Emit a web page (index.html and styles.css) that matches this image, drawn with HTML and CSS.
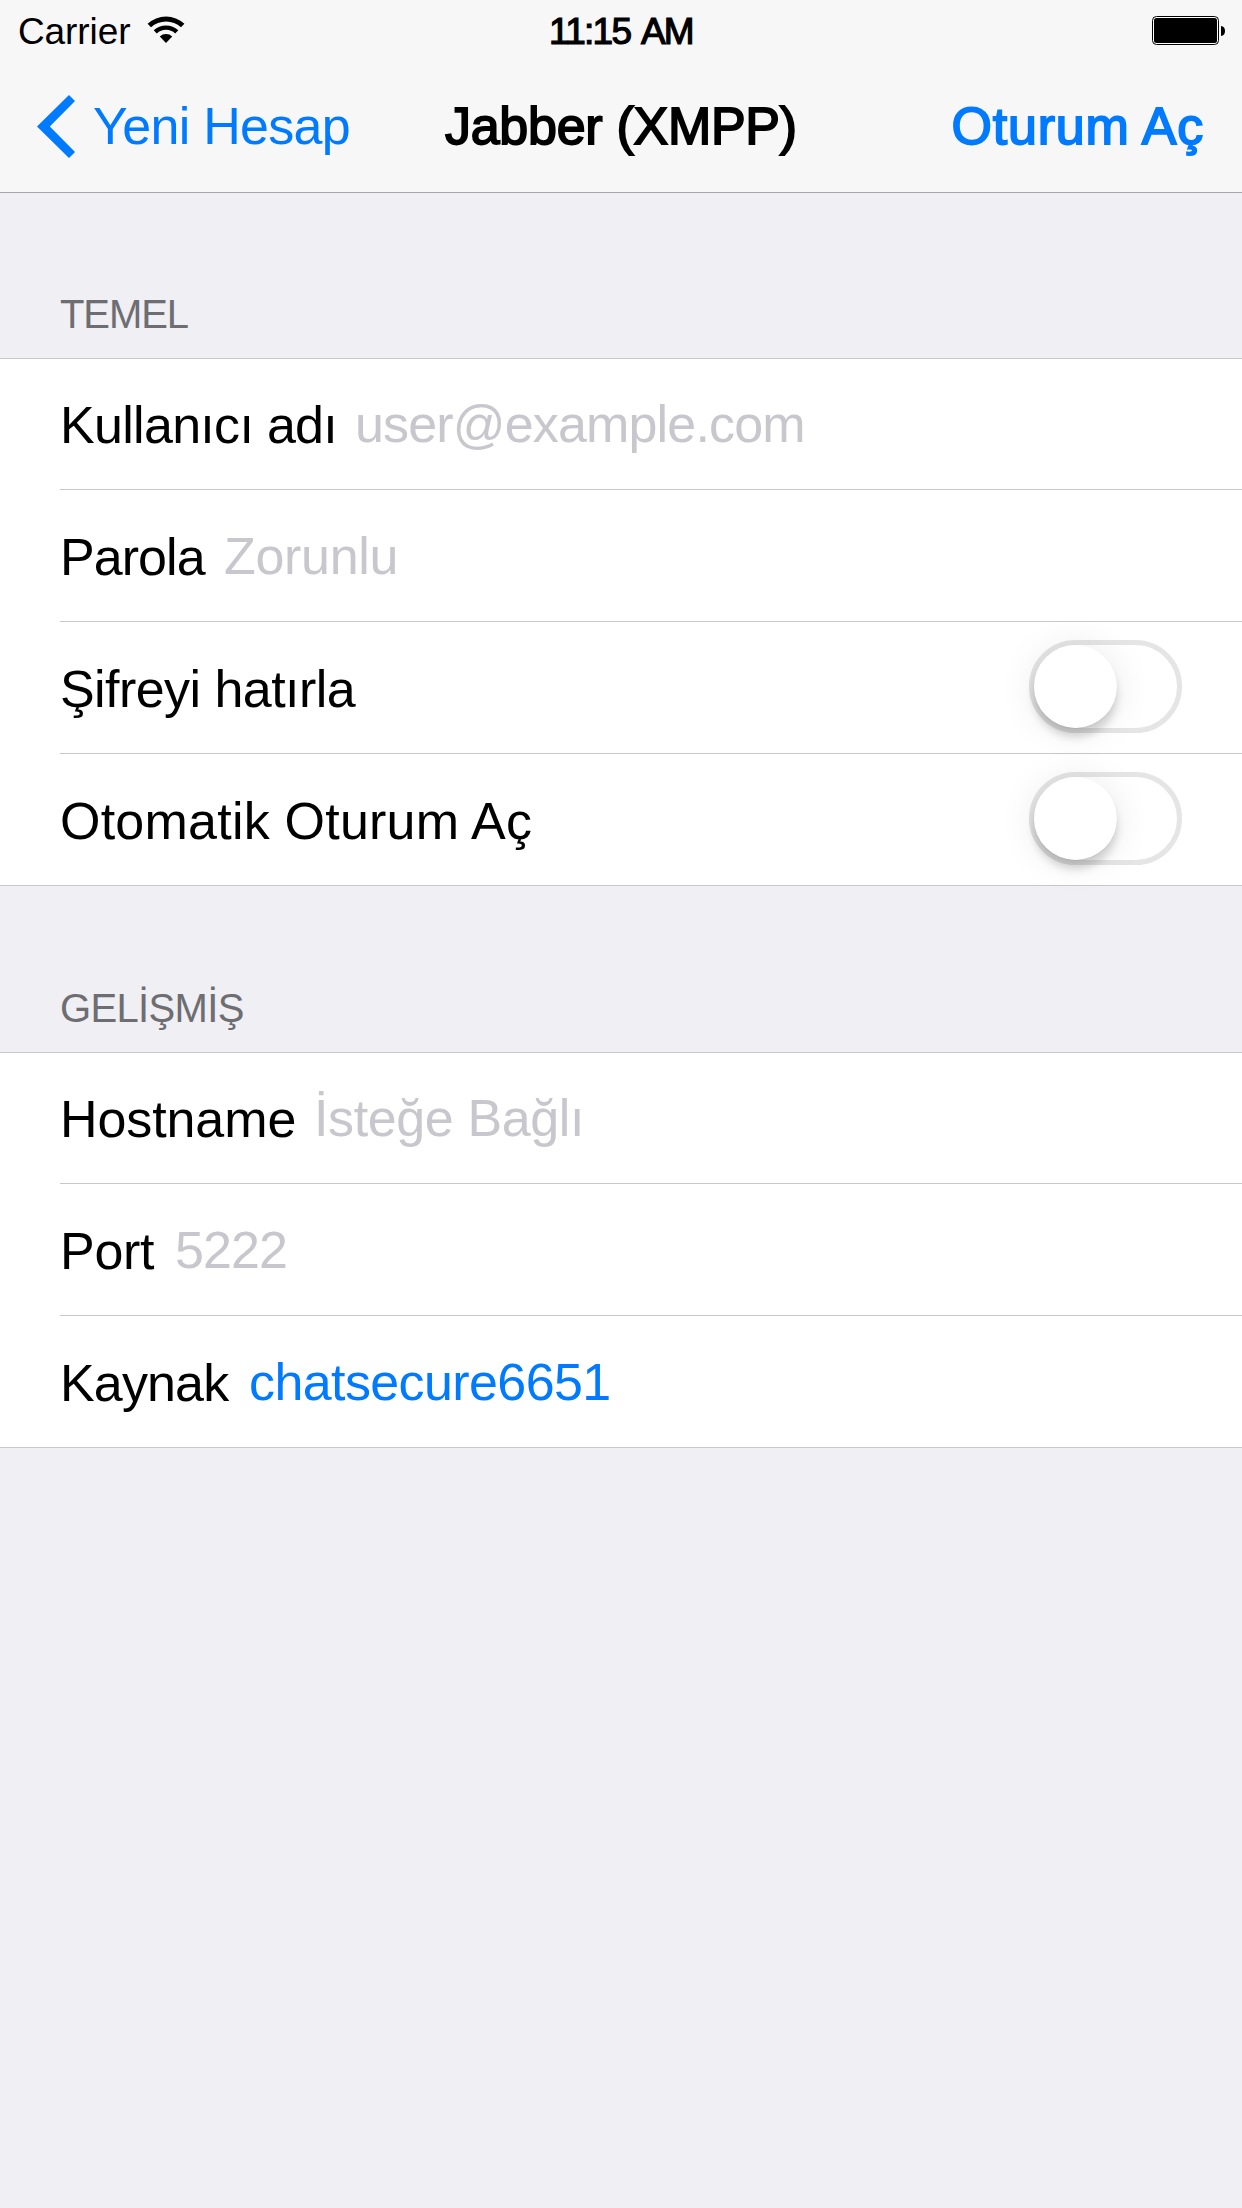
FILE: index.html
```
<!DOCTYPE html>
<html lang="tr">
<head>
<meta charset="utf-8">
<title>Jabber (XMPP)</title>
<link rel="stylesheet" href="styles.css">
</head>
<body>
<header class="top">
  <div class="status">
    <div class="status-left">
      <span class="carrier">Carrier</span>
      <svg class="wifi" width="38" height="28" viewBox="0 0 38 28">
        <path d="M.6 7.8A27 27 0 0 1 37.4 7.8L34 11.3A22.2 22.2 0 0 0 4 11.3Z"/>
        <path d="M6.7 14.3A18 18 0 0 1 31.3 14.3L28.2 17.4A13.6 13.6 0 0 0 9.8 17.4Z"/>
        <path d="M12.8 20.6A9 9 0 0 1 25.2 20.6L19 27Z"/>
      </svg>
    </div>
    <span class="time medium">11:15 AM</span>
    <svg class="battery" width="73" height="29" viewBox="0 0 73 29">
      <rect x=".5" y=".5" width="66" height="28" rx="4" fill="#fff" stroke="#000"/>
      <rect x="2" y="2" width="63" height="25" rx="2.5"/>
      <path d="M69 10Q73 10.500 73 15T69 20Z"/>
    </svg>
  </div>
  <nav class="nav">
    <a class="back">
      <svg class="chevron" width="38" height="63" viewBox="0 0 38 63">
        <path d="M32 0L38 6L12.800 31.500L38 57L32 63L0 31.500Z"/>
      </svg>
      <span class="back-text">Yeni Hesap</span>
    </a>
    <h1 class="title medium">Jabber (XMPP)</h1>
    <a class="login medium">Oturum Aç</a>
  </nav>
</header>
<main>
  <section>
    <h2 class="heading heading-basic">TEMEL</h2>
    <div class="group">
      <div class="row"><span class="label username">Kullanıcı adı</span><span class="value username-value">user@example.com</span></div>
      <div class="row"><span class="label password">Parola</span><span class="value password-value">Zorunlu</span></div>
      <div class="row"><span class="label remember">Şifreyi hatırla</span><span class="switch"><span class="knob"></span></span></div>
      <div class="row"><span class="label autologin">Otomatik Oturum Aç</span><span class="switch"><span class="knob"></span></span></div>
    </div>
  </section>
  <section class="advanced">
    <h2 class="heading heading-advanced">GELİŞMİŞ</h2>
    <div class="group">
      <div class="row"><span class="label hostname">Hostname</span><span class="value hostname-value">İsteğe Bağlı</span></div>
      <div class="row"><span class="label port">Port</span><span class="value port-value">5222</span></div>
      <div class="row"><span class="label resource">Kaynak</span><span class="value resource-value">chatsecure6651</span></div>
    </div>
  </section>
</main>
</body>
</html>
```
FILE: styles.css
```
* { box-sizing: border-box; }
body {
  margin: 0;
  min-height: 2208px;
  background: #efeff4;
  color: #000;
  font-family: "Liberation Sans", Arial, sans-serif;
  font-size: 52px;
  white-space: nowrap;
}
h1, h2 { margin: 0; font-size: inherit; font-weight: 400; }
.medium { -webkit-text-stroke: 1.8px currentColor; }

.top { height: 193px; background: #f7f7f7; border-bottom: 1px solid #a7a7aa; }
.status {
  display: grid;
  grid-template-columns: 549px 1fr auto;
  height: 60px;
  padding: 0 17px 0 0;
  font-size: 37px;
  line-height: 64px;
}
.status-left { display: flex; padding-left: 18px; }
.carrier { width: 129px; letter-spacing: -.1px; }
.wifi { margin-top: 16px; }
.time { letter-spacing: -1.7px; word-spacing: 4px; -webkit-text-stroke-width: 1.2px; }
.battery { margin-top: 16px; }

.nav {
  display: grid;
  grid-template-columns: 445px 1fr auto;
  align-items: center;
  height: 132px;
  padding-right: 38px;
  line-height: 60px;
}
.back { display: flex; align-items: center; padding-left: 37px; color: #007aff; }
.chevron { fill: currentColor; margin-right: 18px; }
.back-text { letter-spacing: -.7px; }
.title { letter-spacing: -.28px; }
.login { color: #007aff; letter-spacing: .75px; }

.heading {
  height: 165px;
  padding: 97px 60px 20px;
  font-size: 40px;
  line-height: 48px;
  color: #6d6d72;
}
.heading-basic { letter-spacing: -1.1px; }
.heading-advanced { height: 166px; padding-top: 98px; letter-spacing: -.65px; }

.group { background: #fff; border: solid #c8c7cc; border-width: 1px 0; }
.row {
  display: flex;
  align-items: center;
  height: 132px;
  margin-left: 60px;
  padding-right: 60px;
  border-bottom: 1px solid #c8c7cc;
  line-height: 60px;
}
.row:first-child { height: 131px; }
.row:last-child { height: 131px; border-bottom: 0; }
.label { margin-top: 2px; }
.value { color: #c7c7cd; }
.username { width: 295px; letter-spacing: -.7px; }
.username-value { letter-spacing: -.84px; }
.password { width: 164px; letter-spacing: -.95px; }
.password-value { letter-spacing: -.32px; }
.remember { letter-spacing: -.56px; }
.autologin { letter-spacing: .23px; }
.hostname { width: 254px; letter-spacing: -.1px; }
.hostname-value { letter-spacing: -.38px; }
.port { width: 115px; letter-spacing: -.3px; }
.port-value { letter-spacing: -.92px; }
.resource { width: 189px; letter-spacing: -.85px; }
.resource-value { color: #007aff; letter-spacing: -.6px; }

.switch {
  width: 153px;
  height: 93px;
  margin: -3px 0 0 auto;
  border: 5px solid #e5e5e5;
  border-radius: 47px;
}
.knob {
  display: block;
  width: 83px;
  height: 83px;
  border-radius: 50%;
  background: #fff;
  box-shadow: 0 9px 9px rgba(0, 0, 0, .16), 0 1px 1px rgba(0, 0, 0, .06), 0 2px 38px rgba(0, 0, 0, .09);
}
```
